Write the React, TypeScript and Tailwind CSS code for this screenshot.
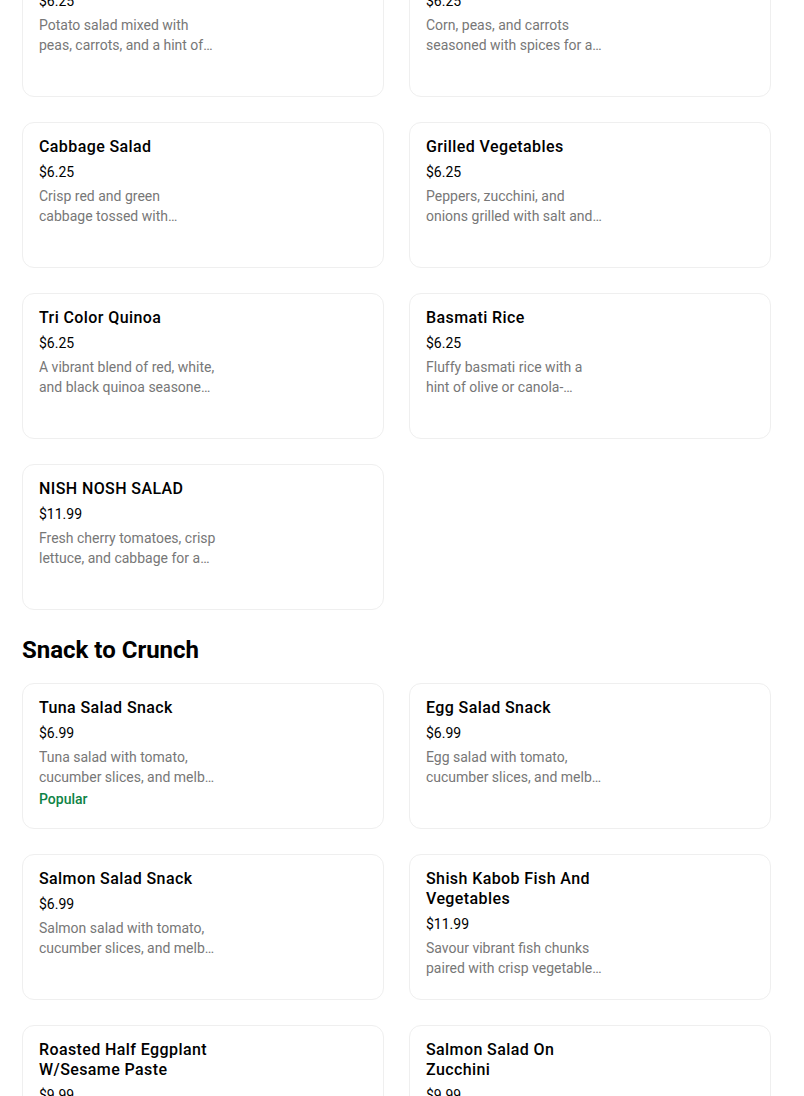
type MenuItem = {
  name: string;
  price: string;
  description: string;
  popular?: boolean;
};

const SIDES: MenuItem[] = [
  {
    name: 'Potato Salad',
    price: '$6.25',
    description: 'Potato salad mixed with peas, carrots, and a hint of mayonnaise for a creamy side.',
  },
  {
    name: 'Mixed Vegetables',
    price: '$6.25',
    description: 'Corn, peas, and carrots seasoned with spices for a flavourful side dish.',
  },
  {
    name: 'Cabbage Salad',
    price: '$6.25',
    description: 'Crisp red and green cabbage tossed with vinaigrette dressing.',
  },
  {
    name: 'Grilled Vegetables',
    price: '$6.25',
    description: 'Peppers, zucchini, and onions grilled with salt and pepper for a smoky side.',
  },
  {
    name: 'Tri Color Quinoa',
    price: '$6.25',
    description: 'A vibrant blend of red, white, and black quinoa seasoned with fresh herbs.',
  },
  {
    name: 'Basmati Rice',
    price: '$6.25',
    description: 'Fluffy basmati rice with a hint of olive or canola-infused oil.',
  },
  {
    name: 'NISH NOSH SALAD',
    price: '$11.99',
    description: 'Fresh cherry tomatoes, crisp lettuce, and cabbage for a refreshing salad.',
  },
];

const SNACKS: MenuItem[] = [
  {
    name: 'Tuna Salad Snack',
    price: '$6.99',
    description: 'Tuna salad with tomato, cucumber slices, and melba toast.',
    popular: true,
  },
  {
    name: 'Egg Salad Snack',
    price: '$6.99',
    description: 'Egg salad with tomato, cucumber slices, and melba toast.',
  },
  {
    name: 'Salmon Salad Snack',
    price: '$6.99',
    description: 'Salmon salad with tomato, cucumber slices, and melba toast.',
  },
  {
    name: 'Shish Kabob Fish And Vegetables',
    price: '$11.99',
    description: 'Savour vibrant fish chunks paired with crisp vegetables grilled to perfection.',
  },
  {
    name: 'Roasted Half Eggplant W/Sesame Paste',
    price: '$9.99',
    description: 'Roasted eggplant half topped with sesame paste and herbs.',
  },
  {
    name: 'Salmon Salad On Zucchini',
    price: '$9.99',
    description: 'Salmon salad served on fresh zucchini slices.',
  },
];

function ItemCard({ item }: { item: MenuItem }) {
  return (
    <div className="min-h-[146px] rounded-xl border border-[#efefef] bg-white px-4 pt-[14px] pb-4">
      <div className="w-[177px]">
        <div className="text-[16px] leading-5 font-medium tracking-[0.4px] text-black">{item.name}</div>
        <div className="mt-[5px] text-[14px] leading-5 text-black">{item.price}</div>
        <p className="mt-1 line-clamp-2 text-[14px] leading-5 text-[#777777]">{item.description}</p>
        {item.popular && (
          <div className="mt-[2px] text-[14px] leading-5 font-medium text-[#0e8345]">Popular</div>
        )}
      </div>
    </div>
  );
}

function ItemGrid({ items }: { items: MenuItem[] }) {
  return (
    <div className="grid grid-cols-2 gap-x-[25px] gap-y-[25px]">
      {items.map((item) => (
        <ItemCard key={item.name} item={item} />
      ))}
    </div>
  );
}

export default function App() {
  return (
    <div className="min-h-screen overflow-hidden bg-white font-['Roboto',sans-serif]">
      <div className="mt-[-49px] ml-[22px] w-[749px]">
        <ItemGrid items={SIDES} />
        <h2 className="mt-6 mb-[17px] text-[24px] leading-8 font-bold text-black">Snack to Crunch</h2>
        <ItemGrid items={SNACKS} />
      </div>
    </div>
  );
}
